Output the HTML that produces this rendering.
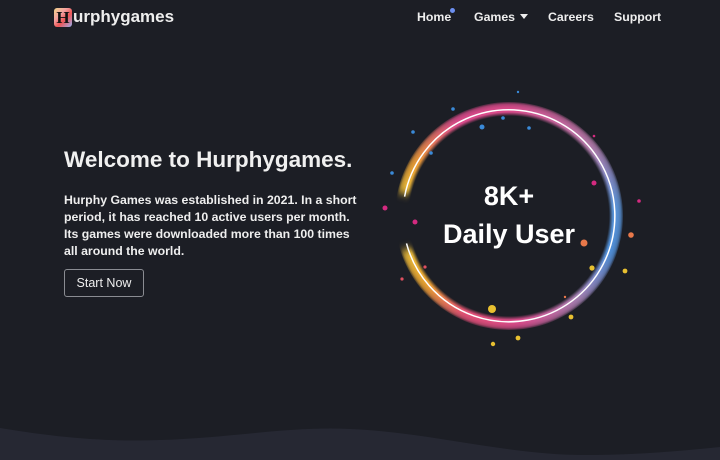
<!DOCTYPE html>
<html><head><meta charset="utf-8"><style>
*{margin:0;padding:0;box-sizing:border-box}
body{width:720px;height:460px;background:#1c1e25;overflow:hidden;position:relative;font-family:"Liberation Sans",sans-serif;color:#f2f2f2}
.logo{position:absolute;left:54px;top:6px;height:22px;display:flex;align-items:center}
.ic{width:18px;height:19px;border-radius:3px;background:linear-gradient(135deg,#f0d48a 0%,#f3a0a0 35%,#e55 60%,#9ab0f0 100%);color:#111;font-weight:bold;font-size:17px;line-height:19px;text-align:center;font-family:"Liberation Serif",serif}
.logo span.t{font-size:17px;font-weight:bold;margin-left:1px;color:#eee;letter-spacing:0}
.nav{position:absolute;top:10px;font-size:12.3px;font-weight:bold;color:#eee}
.btn{position:absolute;left:64px;top:269px;width:80px;height:28px;border:1px solid #8a8c92;border-radius:3px;font-size:12.5px;line-height:26px;text-align:center;color:#eee}
h1{position:absolute;left:64px;top:147px;font-size:22.5px;font-weight:bold;white-space:nowrap;color:#f0f0f0}
p{position:absolute;left:64px;top:192px;width:300px;font-size:12.3px;line-height:17px;font-weight:bold;color:#eee}
.ring{position:absolute;left:395px;top:102px;width:228px;height:228px;border-radius:50%;
background:conic-gradient(#d94a8a 0deg,#b07aa8 50deg,#5a94d8 85deg,#4f8fd8 110deg,#a47fb0 140deg,#d94a8a 175deg,#e25075 205deg,#e8a030 230deg,#e6b838 250deg,transparent 254deg,transparent 280deg,#e6b838 284deg,#e89a35 300deg,#d94a8a 330deg,#d94a8a 360deg);
-webkit-mask:radial-gradient(circle,transparent 100px,#000 104px,#000 112px,transparent 116px);filter:blur(3.5px)}
.big{position:absolute;left:409px;width:200px;text-align:center;font-size:27px;font-weight:bold;color:#fff}
</style></head><body>
<div class="logo"><div class="ic">H</div><span class="t">urphygames</span></div>
<div class="nav" style="left:417px">Home</div>
<div style="position:absolute;left:450px;top:8px;width:5px;height:5px;border-radius:50%;background:#6c8ff0"></div>
<div class="nav" style="left:474px">Games <span style="display:inline-block;width:0;height:0;border-left:4.5px solid transparent;border-right:4.5px solid transparent;border-top:5px solid #eee;vertical-align:2px;margin-left:2px"></span></div>
<div class="nav" style="left:548px">Careers</div>
<div class="nav" style="left:614px">Support</div>
<h1>Welcome to Hurphygames.</h1>
<p>Hurphy Games was established in 2021. In a short period, it has reached 10 active users per month. Its games were downloaded more than 100 times all around the world.</p>
<div class="btn">Start Now</div>
<div class="ring"></div>
<div class="big" style="top:181px">8K+</div>
<div class="big" style="top:219px">Daily User</div>
<svg style="position:absolute;left:0;top:0" width="720" height="460">
<path d="M404.6 196.6 A106 106 0 1 1 406.5 243.4" fill="none" stroke="#fff" stroke-width="1.5"/>
<g fill="#3a8ad8">
<circle cx="518" cy="92" r="1.2"/><circle cx="453" cy="109" r="1.8"/><circle cx="503" cy="118" r="1.8"/><circle cx="482" cy="127" r="2.5"/><circle cx="529" cy="128" r="1.8"/><circle cx="413" cy="132" r="1.8"/><circle cx="431" cy="153" r="1.8"/><circle cx="392" cy="173" r="1.8"/></g>
<g fill="#d42a80"><circle cx="594" cy="136" r="1.3"/><circle cx="594" cy="183" r="2.5"/><circle cx="639" cy="201" r="1.8"/><circle cx="385" cy="208" r="2.5"/><circle cx="415" cy="222" r="2.5"/></g>
<g fill="#e8784a"><circle cx="631" cy="235" r="2.8"/><circle cx="584" cy="243" r="3.5"/><circle cx="565" cy="297" r="1.2"/></g>
<g fill="#e05060"><circle cx="425" cy="267" r="1.6"/><circle cx="402" cy="279" r="1.6"/></g>
<g fill="#e8c030"><circle cx="592" cy="268" r="2.6"/><circle cx="625" cy="271" r="2.4"/><circle cx="492" cy="309" r="4"/><circle cx="571" cy="317" r="2.4"/><circle cx="518" cy="338" r="2.4"/><circle cx="493" cy="344" r="2.2"/></g>
<path d="M0 428 C60 438 110 442 160 440 C230 438 290 426 350 429 C430 432 510 456 590 455 C640 455 690 450 720 447 L720 460 L0 460Z" fill="#262833"/>
</svg>
</body></html>
